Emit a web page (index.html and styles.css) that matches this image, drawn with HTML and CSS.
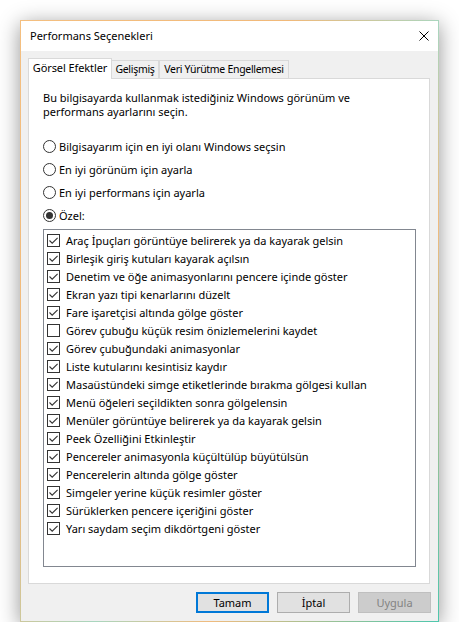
FILE: index.html
```html
<!DOCTYPE html>
<html lang="tr">
<head>
<meta charset="utf-8">
<title>Performans Seçenekleri</title>
<link rel="stylesheet" href="styles.css">
</head>
<body>
<div class="window">
  <div class="titlebar">
    <span class="title">Performans Seçenekleri</span>
    <span class="close"><svg width="10" height="10" viewBox="0 0 10 10"><path d="M0.5 0.5 L9.5 9.5 M9.5 0.5 L0.5 9.5" stroke="#000" stroke-width="1" fill="none"/></svg></span>
  </div>
  <div class="client">
    <div class="tabs">
      <div class="tab tab-active">Görsel Efektler</div>
      <div class="tab tab-2">Gelişmiş</div>
      <div class="tab tab-3">Veri Yürütme Engellemesi</div>
    </div>
    <div class="panel">
      <p class="desc">Bu bilgisayarda kullanmak istediğiniz Windows görünüm ve<br>performans ayarlarını seçin.</p>
      <div class="radios">
        <div class="radio-row"><span class="radio"></span><span>Bilgisayarım için en iyi olanı Windows seçsin</span></div>
        <div class="radio-row"><span class="radio"></span><span>En iyi görünüm için ayarla</span></div>
        <div class="radio-row"><span class="radio"></span><span>En iyi performans için ayarla</span></div>
        <div class="radio-row"><span class="radio radio-on"></span><span>Özel:</span></div>
      </div>
      <div class="listbox">
        <div class="item"><span class="cb"><svg viewBox="0 0 11 11"><path d="M1.5 5.5 L4.2 8.2 L9.6 2.8"/></svg></span>Araç İpuçları görüntüye belirerek ya da kayarak gelsin</div>
        <div class="item"><span class="cb"><svg viewBox="0 0 11 11"><path d="M1.5 5.5 L4.2 8.2 L9.6 2.8"/></svg></span>Birleşik giriş kutuları kayarak açılsın</div>
        <div class="item"><span class="cb"><svg viewBox="0 0 11 11"><path d="M1.5 5.5 L4.2 8.2 L9.6 2.8"/></svg></span>Denetim ve öğe animasyonlarını pencere içinde göster</div>
        <div class="item"><span class="cb"><svg viewBox="0 0 11 11"><path d="M1.5 5.5 L4.2 8.2 L9.6 2.8"/></svg></span>Ekran yazı tipi kenarlarını düzelt</div>
        <div class="item"><span class="cb"><svg viewBox="0 0 11 11"><path d="M1.5 5.5 L4.2 8.2 L9.6 2.8"/></svg></span>Fare işaretçisi altında gölge göster</div>
        <div class="item"><span class="cb"></span>Görev çubuğu küçük resim önizlemelerini kaydet</div>
        <div class="item"><span class="cb"><svg viewBox="0 0 11 11"><path d="M1.5 5.5 L4.2 8.2 L9.6 2.8"/></svg></span>Görev çubuğundaki animasyonlar</div>
        <div class="item"><span class="cb"><svg viewBox="0 0 11 11"><path d="M1.5 5.5 L4.2 8.2 L9.6 2.8"/></svg></span>Liste kutularını kesintisiz kaydır</div>
        <div class="item"><span class="cb"><svg viewBox="0 0 11 11"><path d="M1.5 5.5 L4.2 8.2 L9.6 2.8"/></svg></span>Masaüstündeki simge etiketlerinde bırakma gölgesi kullan</div>
        <div class="item"><span class="cb"><svg viewBox="0 0 11 11"><path d="M1.5 5.5 L4.2 8.2 L9.6 2.8"/></svg></span>Menü öğeleri seçildikten sonra gölgelensin</div>
        <div class="item"><span class="cb"><svg viewBox="0 0 11 11"><path d="M1.5 5.5 L4.2 8.2 L9.6 2.8"/></svg></span>Menüler görüntüye belirerek ya da kayarak gelsin</div>
        <div class="item"><span class="cb"><svg viewBox="0 0 11 11"><path d="M1.5 5.5 L4.2 8.2 L9.6 2.8"/></svg></span>Peek Özelliğini Etkinleştir</div>
        <div class="item"><span class="cb"><svg viewBox="0 0 11 11"><path d="M1.5 5.5 L4.2 8.2 L9.6 2.8"/></svg></span>Pencereler animasyonla küçültülüp büyütülsün</div>
        <div class="item"><span class="cb"><svg viewBox="0 0 11 11"><path d="M1.5 5.5 L4.2 8.2 L9.6 2.8"/></svg></span>Pencerelerin altında gölge göster</div>
        <div class="item"><span class="cb"><svg viewBox="0 0 11 11"><path d="M1.5 5.5 L4.2 8.2 L9.6 2.8"/></svg></span>Simgeler yerine küçük resimler göster</div>
        <div class="item"><span class="cb"><svg viewBox="0 0 11 11"><path d="M1.5 5.5 L4.2 8.2 L9.6 2.8"/></svg></span>Sürüklerken pencere içeriğini göster</div>
        <div class="item"><span class="cb"><svg viewBox="0 0 11 11"><path d="M1.5 5.5 L4.2 8.2 L9.6 2.8"/></svg></span>Yarı saydam seçim dikdörtgeni göster</div>
      </div>
    </div>
    <div class="buttons">
      <div class="btn btn-default">Tamam</div>
      <div class="btn">İptal</div>
      <div class="btn btn-disabled">Uygula</div>
    </div>
  </div>
</div>
</body>
</html>
```

FILE: styles.css
```css
* { box-sizing: border-box; }

html, body {
  margin: 0;
  padding: 0;
  background: #ffffff;
}

body {
  font-family: "Noto Sans", "Open Sans", sans-serif;
  font-size: 11px;
  color: #000;
}

.window {
  margin: 20px 0 0 20px;
  width: 419px;
  height: 602px;
  border: 1px solid #e9c08a;
  border-image: linear-gradient(120deg, #f4bf80 0%, #f1b979 35%, #a9d6bf 55%, #f0bb7e 70%, #4ec7ad 100%) 1;
  box-shadow: 0 4px 20px rgba(0, 0, 0, 0.42);
  display: flex;
  flex-direction: column;
  background: #f0f0f0;
}

.titlebar {
  height: 30px;
  background: #ffffff;
  display: flex;
  align-items: center;
  justify-content: space-between;
  padding: 0 9px 0 9px;
}

.title {
  font-size: 11px;
  line-height: 16px;
}

.close {
  width: 10px;
  height: 10px;
  display: flex;
  margin-top: -1px;
}

.client {
  flex: 1;
  display: flex;
  flex-direction: column;
  padding: 7px 8px 0 7px;
}

.tabs {
  display: flex;
  align-items: flex-end;
  height: 20px;
  position: relative;
  z-index: 1;
}

.tab {
  flex: none;
  height: 18px;
  border: 1px solid #d9d9d9;
  border-bottom: none;
  background: #f0f0f0;
  line-height: 16px;
  text-align: center;
  white-space: nowrap;
  padding: 0;
  font-size: 10.5px;
  letter-spacing: -0.3px;
}

.tab-active {
  width: 84px;
  height: 21px;
  background: #ffffff;
  margin-bottom: -1px;
  line-height: 17px;
  font-size: 11px;
  letter-spacing: -0.1px;
}

.tab-2 {
  width: 47px;
  border-left: none;
}

.tab-3 {
  width: 130px;
}

.panel {
  height: 506px;
  background: #ffffff;
  border: 1px solid #d9d9d9;
  padding: 12px 13px 0 14px;
}

.desc {
  margin: 0;
  line-height: 14px;
}

.radios {
  margin-top: 16px;
  display: flex;
  flex-direction: column;
}

.radio-row {
  height: 23px;
  display: flex;
  align-items: center;
  gap: 3px;
}

.radio {
  width: 13px;
  height: 13px;
  border: 1px solid #333333;
  border-radius: 50%;
  background: #fff;
  display: flex;
  align-items: center;
  justify-content: center;
  flex: none;
}

.radio-on::after {
  content: "";
  width: 7px;
  height: 7px;
  border-radius: 50%;
  background: #333333;
}

.listbox {
  margin-top: 2px;
  height: 338px;
  border: 1px solid #828790;
  padding: 1px 0 0 3px;
}

.item {
  height: 18px;
  display: flex;
  align-items: center;
  gap: 6px;
  white-space: nowrap;
}

.cb {
  width: 13px;
  height: 13px;
  border: 1px solid #333333;
  background: #fff;
  flex: none;
  display: flex;
}

.cb svg {
  width: 11px;
  height: 11px;
}

.cb path {
  fill: none;
  stroke: #333333;
  stroke-width: 1.1;
}

.buttons {
  display: flex;
  justify-content: flex-end;
  gap: 8px;
  margin-top: 8px;
  margin-right: -1px;
}

.btn {
  width: 73px;
  height: 21px;
  border: 1px solid #adadad;
  background: #e1e1e1;
  display: flex;
  align-items: center;
  justify-content: center;
  line-height: 16px;
}

.btn-default {
  border: 2px solid #0078d7;
}

.btn-disabled {
  background: #cccccc;
  border-color: #bfbfbf;
  color: #838383;
}
```
